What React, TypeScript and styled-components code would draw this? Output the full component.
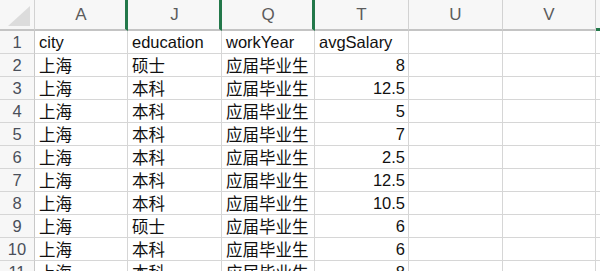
import React from "react";
import styled, { createGlobalStyle } from "styled-components";

const GlobalStyle = createGlobalStyle`
  html, body {
    margin: 0;
    padding: 0;
    background: #ffffff;
    overflow: hidden;
  }
`;

const FONT = `"Liberation Sans", "Noto Sans CJK SC", Arial, sans-serif`;

const COLUMNS = ["A", "J", "Q", "T", "U", "V"];
// a green bar marks hidden columns after these letters
const HIDDEN_AFTER = new Set(["A", "J", "Q"]);

const ROWS: (string | number)[][] = [
  ["city", "education", "workYear", "avgSalary"],
  ["上海", "硕士", "应届毕业生", 8],
  ["上海", "本科", "应届毕业生", 12.5],
  ["上海", "本科", "应届毕业生", 5],
  ["上海", "本科", "应届毕业生", 7],
  ["上海", "本科", "应届毕业生", 2.5],
  ["上海", "本科", "应届毕业生", 12.5],
  ["上海", "本科", "应届毕业生", 10.5],
  ["上海", "硕士", "应届毕业生", 6],
  ["上海", "本科", "应届毕业生", 6],
  ["上海", "本科", "应届毕业生", 8],
];

const Sheet = styled.div`
  display: grid;
  grid-template-columns: 35px 93px 94px 93px 94px 94px 93px 1fr;
  grid-template-rows: 31px;
  grid-auto-rows: 23px;
  width: 600px;
  height: 271px;
  overflow: hidden;
  font-family: ${FONT};
  background: #ffffff;
`;

const Corner = styled.div`
  position: relative;
  background: #f7f7f7;
  border-right: 1px solid #d2d2d2;
  border-bottom: 2px solid #c4c4c4;
  box-sizing: border-box;

  &::after {
    content: "";
    position: absolute;
    right: 4px;
    bottom: 3px;
    width: 0;
    height: 0;
    border-left: 22px solid transparent;
    border-bottom: 20px solid #dcdcdc;
  }
`;

const ColHeader = styled.div<{ $hidden?: boolean }>`
  display: flex;
  align-items: center;
  justify-content: center;
  background: #f7f7f7;
  color: #5c5c5c;
  font-size: 17px;
  border-right: ${(p) => (p.$hidden ? "3px solid #23784a" : "1px solid #d2d2d2")};
  border-bottom: 2px solid #c4c4c4;
  box-sizing: border-box;
  padding: 1px 0 0 ${(p) => (p.$hidden ? "2px" : "0")};
`;

const EdgeHeader = styled.div`
  position: relative;
  background: #f7f7f7;
  border-bottom: 2px solid #c4c4c4;
  box-sizing: border-box;

  &::after {
    content: "";
    position: absolute;
    left: 0;
    right: 0;
    bottom: -2px;
    height: 3px;
    background: #23784a;
  }
`;

const RowHeader = styled.div`
  display: flex;
  align-items: center;
  justify-content: center;
  background: #f7f7f7;
  color: #4a4f5a;
  font-size: 16.5px;
  border-right: 1px solid #c8c8c8;
  border-bottom: 1px solid #d6d6d6;
  box-sizing: border-box;
`;

const Cell = styled.div<{ $numeric?: boolean }>`
  display: flex;
  align-items: center;
  justify-content: ${(p) => (p.$numeric ? "flex-end" : "flex-start")};
  padding: 0 3px 0 4px;
  color: #111111;
  font-size: 16.5px;
  white-space: nowrap;
  overflow: hidden;
  border-right: 1px solid #d6d6d6;
  border-bottom: 1px solid #d6d6d6;
  box-sizing: border-box;
`;

const Filler = styled.div`
  border-bottom: 1px solid #d6d6d6;
  box-sizing: border-box;
`;

export default function App() {
  return (
    <>
      <GlobalStyle />
      <Sheet>
        <Corner />
        {COLUMNS.map((c) => (
          <ColHeader key={c} $hidden={HIDDEN_AFTER.has(c)}>
            {c}
          </ColHeader>
        ))}
        <EdgeHeader />
        {ROWS.map((row, i) => (
          <React.Fragment key={i}>
            <RowHeader>{i + 1}</RowHeader>
            {COLUMNS.map((c, j) => {
              const v = row[j];
              return (
                <Cell key={c} $numeric={typeof v === "number"}>
                  {v ?? ""}
                </Cell>
              );
            })}
            <Filler />
          </React.Fragment>
        ))}
      </Sheet>
    </>
  );
}
